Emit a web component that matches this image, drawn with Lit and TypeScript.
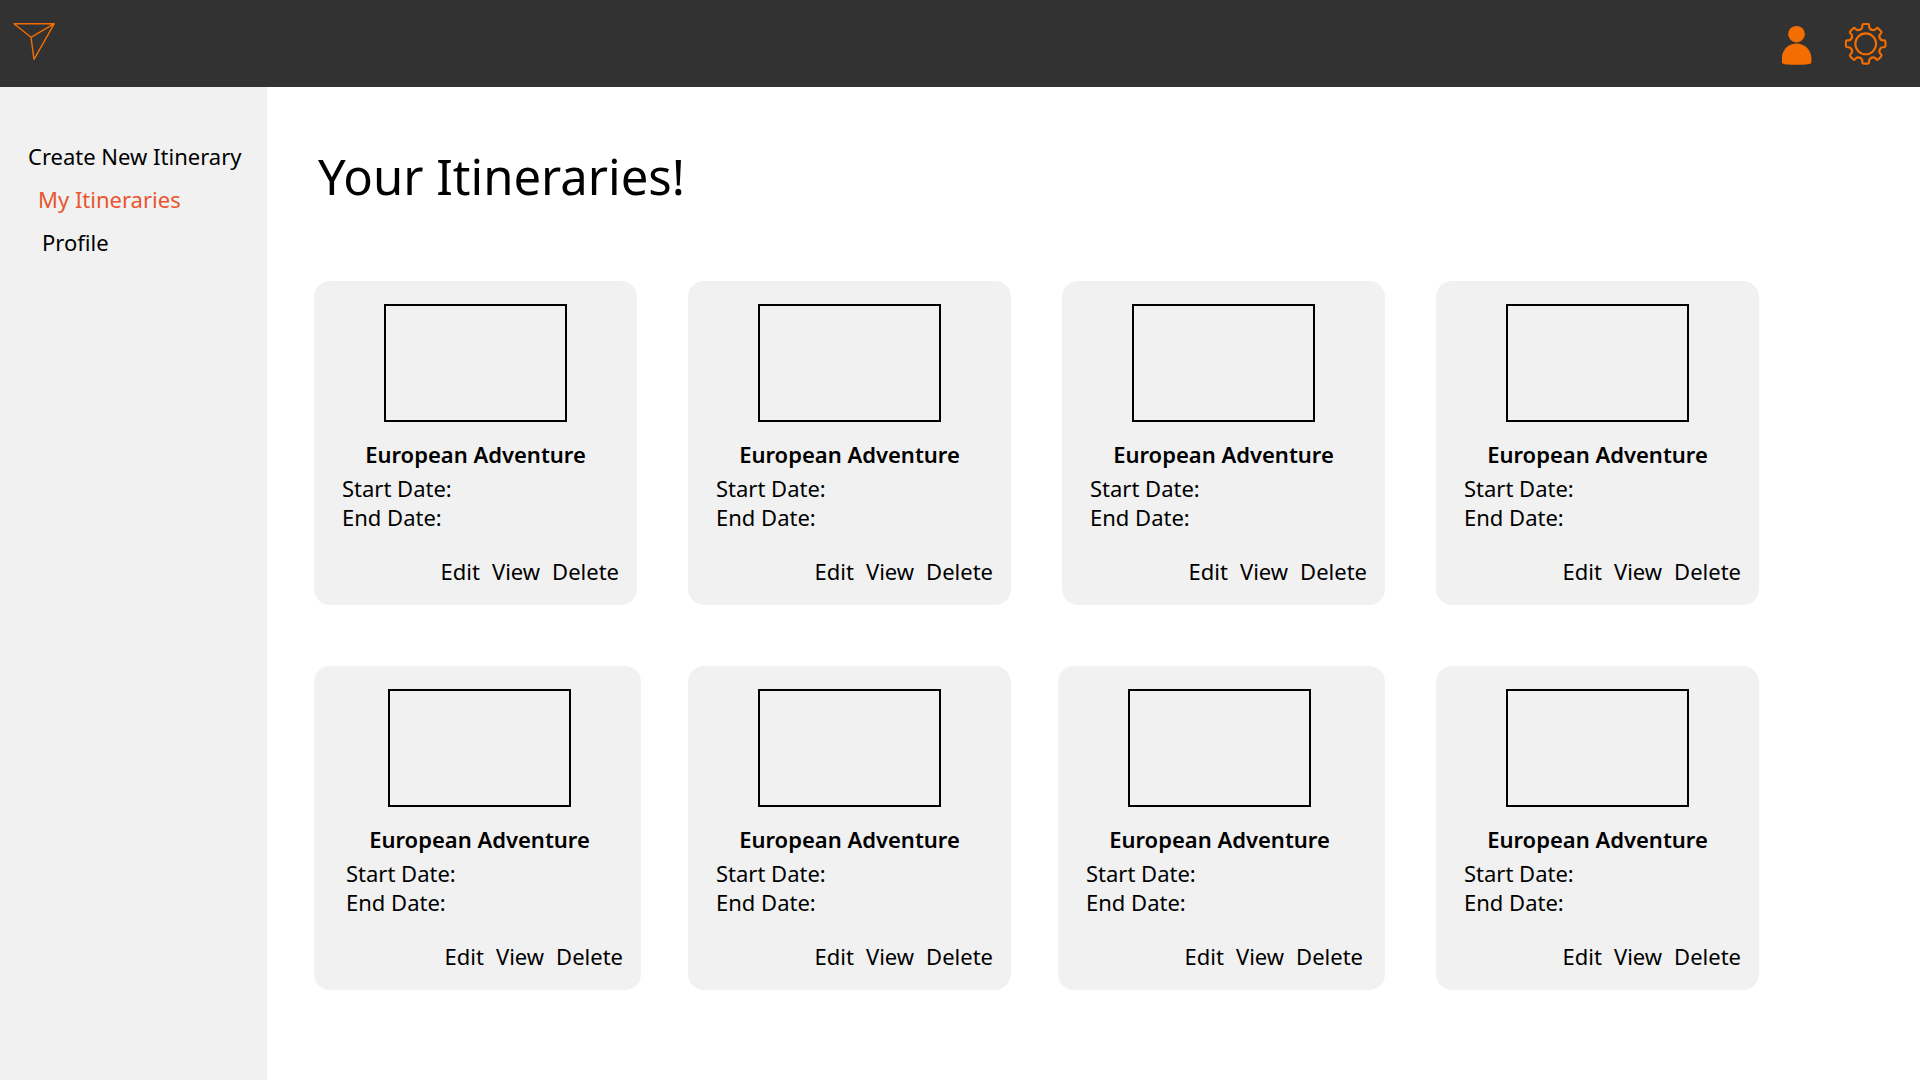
import { LitElement, html, svg, css } from "lit";
import { customElement, property } from "lit/decorators.js";

interface Itinerary {
  title: string;
  bleed: "" | "start" | "end";
}

const title = "European Adventure";
const itineraries: Itinerary[] = [
  { title, bleed: "" },
  { title, bleed: "" },
  { title, bleed: "" },
  { title, bleed: "" },
  { title, bleed: "end" },
  { title, bleed: "" },
  { title, bleed: "start" },
  { title, bleed: "" },
];

/* One gear tooth, valley to valley; eight turns of it close the outline. */
const gearTooth =
  "M-5.8 -14Q-3.4 -15 -3.4 -17.2V-18.4Q-3.4 -19.8 -2 -19.8H2Q3.4 -19.8 3.4 -18.4V-17.2Q3.4 -15 5.8 -14";
const gearAngles = [0, 45, 90, 135, 180, 225, 270, 315];

@customElement("itinerary-card")
export class ItineraryCard extends LitElement {
  @property() name = "";

  static styles = css`
    :host {
      display: flex;
      flex-direction: column;
      box-sizing: border-box;
      padding: 23px 18px 19px 28px;
      border-radius: 16px;
      background: #f1f1f1;
    }
    .frame {
      align-self: center;
      box-sizing: border-box;
      width: 183px;
      height: 118px;
      margin-right: 10px;
      border: 2px solid #000;
    }
    .name {
      margin: 18px 10px 5px 0;
      font-size: 22px;
      line-height: 29px;
      font-weight: 600;
      text-align: center;
    }
    .date {
      margin: 0;
    }
    .actions {
      display: flex;
      justify-content: flex-end;
      gap: 12px;
      margin-top: 25px;
    }
    button {
      padding: 0;
      border: 0;
      background: none;
      color: inherit;
      font: inherit;
      cursor: pointer;
    }
  `;

  render() {
    return html`
      <div class="frame"></div>
      <h2 class="name">${this.name}</h2>
      <p class="date">Start Date:</p>
      <p class="date">End Date:</p>
      <div class="actions">
        <button type="button">Edit</button>
        <button type="button">View</button>
        <button type="button">Delete</button>
      </div>
    `;
  }
}

@customElement("app-root")
export class AppRoot extends LitElement {
  static styles = css`
    :host {
      display: grid;
      grid-template-columns: 267px minmax(0, 1fr);
      grid-template-rows: 87px 1fr;
      min-height: 100vh;
      background: #fff;
      color: #000;
      font-family: "Noto Sans", "Open Sans", sans-serif;
      font-size: 22px;
      line-height: 29px;
    }
    .header {
      grid-column: 1 / -1;
      display: flex;
      align-items: center;
      justify-content: space-between;
      padding: 0 30px 0 12px;
      background: #323232;
    }
    .header a,
    .header button {
      display: block;
      padding: 0;
      border: 0;
      background: none;
      cursor: pointer;
    }
    .header svg {
      display: block;
    }
    .logo {
      align-self: flex-start;
      margin-top: 20px;
    }
    .tools {
      display: flex;
      align-items: center;
      gap: 30px;
    }
    .sidebar {
      display: flex;
      flex-direction: column;
      gap: 14px;
      padding: 55px 0 0 28px;
      background: #f1f1f1;
    }
    .sidebar a {
      color: #000;
      text-decoration: none;
      white-space: nowrap;
    }
    .sidebar .sub {
      margin-left: 10px;
    }
    .sidebar .deep {
      margin-left: 14px;
    }
    .sidebar .current {
      color: #e8552f;
    }
    .main {
      padding: 57px 161px 57px 47px;
    }
    .heading {
      margin: 0 0 73px 4px;
      font-size: 49px;
      line-height: 64px;
      font-weight: 400;
    }
    .cards {
      display: grid;
      grid-template-columns: repeat(4, minmax(0, 1fr));
      gap: 61px 51px;
    }
    .bleed-end {
      margin-right: -4px;
      padding-left: 32px;
    }
    .bleed-start {
      margin-left: -4px;
      padding-right: 22px;
    }
  `;

  render() {
    return html`
      <header class="header">
        <a class="logo" href="#" aria-label="Home">
          <svg width="44" height="42" viewBox="0 0 44 42" fill="none" stroke="#f46d00" stroke-width="1.4" stroke-linejoin="round">
            <path d="M2 3.7H42.3L22 39.3L19 17.3ZM19 17.3L42.3 3.7" />
          </svg>
        </a>
        <div class="tools">
          <button type="button" aria-label="Profile">
            <svg width="30" height="42" viewBox="0 0 30 42" fill="#f46d00">
              <circle cx="14.5" cy="11.2" r="8.3" />
              <path d="M-0.2 35.5C-0.2 27 6.4 20.6 14.5 20.6S29.4 27 29.4 35.5V39.4C29.4 41.2 24 41.8 14.5 41.8S-0.2 41.2 -0.2 39.4Z" />
            </svg>
          </button>
          <button type="button" aria-label="Settings">
            <svg width="48" height="42" viewBox="-23.7 -20.8 48 42" fill="none" stroke="#f46d00" stroke-width="2.1" stroke-linecap="round" stroke-linejoin="round">
              <circle r="10.4" />
              ${gearAngles.map(
                (angle) => svg`<path d=${gearTooth} transform="rotate(${angle})" />`
              )}
            </svg>
          </button>
        </div>
      </header>
      <nav class="sidebar" aria-label="Main">
        <a href="#create">Create New Itinerary</a>
        <a class="sub current" href="#itineraries" aria-current="page">My Itineraries</a>
        <a class="deep" href="#profile">Profile</a>
      </nav>
      <main class="main">
        <h1 class="heading">Your Itineraries!</h1>
        <section class="cards">
          ${itineraries.map(
            (item) => html`<itinerary-card
              class=${item.bleed ? `bleed-${item.bleed}` : ""}
              .name=${item.title}
            ></itinerary-card>`
          )}
        </section>
      </main>
    `;
  }
}
